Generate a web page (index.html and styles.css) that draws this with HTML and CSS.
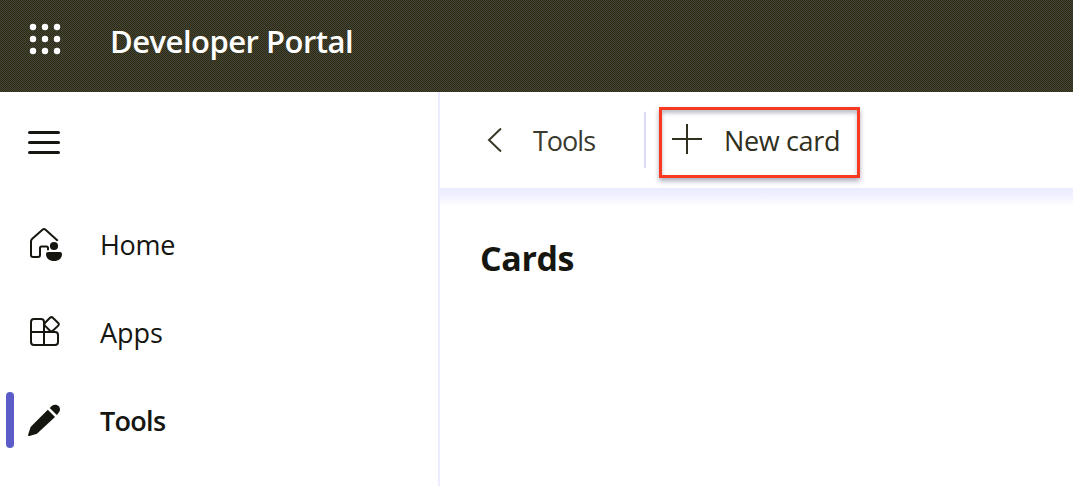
FILE: index.html
```html
<!DOCTYPE html>
<html lang="en">
<head>
<meta charset="utf-8">
<title>Developer Portal</title>
<link rel="stylesheet" href="styles.css">
</head>
<body>
<header class="topbar">
  <svg class="waffle" width="32" height="32" viewBox="0 0 32 32" fill="#fff">
    <circle cx="4" cy="4" r="3.2"/><circle cx="16" cy="4" r="3.2"/><circle cx="28" cy="4" r="3.2"/>
    <circle cx="4" cy="16" r="3.2"/><circle cx="16" cy="16" r="3.2"/><circle cx="28" cy="16" r="3.2"/>
    <circle cx="4" cy="28" r="3.2"/><circle cx="16" cy="28" r="3.2"/><circle cx="28" cy="28" r="3.2"/>
  </svg>
  <span class="brand">Developer Portal</span>
</header>
<div class="layout">
  <nav class="sidebar">
    <svg class="menu" width="32" height="24" viewBox="0 0 32 24" stroke="#161611" stroke-width="3" stroke-linecap="round">
      <path d="M1.5 2.5h29M1.5 12.5h29M1.5 22.5h29"/>
    </svg>
    <a class="item">
      <svg class="icon" width="40" height="40" viewBox="0 0 40 40" fill="none" stroke="#161611" stroke-width="2" stroke-linecap="round" stroke-linejoin="round">
        <path d="M34.2 15.2 22.3 4.6Q21 3.4 19.7 4.6L9 14Q8 15 8 16.4V30Q8 32 10 32H15Q17 32 17 30V23Q17 21.5 18.5 21.5H23.5Q25 21.5 25 23V24.5"/>
        <g fill="#161611" stroke="none"><circle cx="31" cy="21" r="4.1"/><path d="M25 27H37Q39 27 39 29C39 33.5 35.5 36 31 36S23 33.5 23 29Q23 27 25 27Z"/></g>
      </svg>
      <span class="label home">Home</span>
    </a>
    <a class="item">
      <svg class="icon" width="40" height="40" viewBox="0 0 40 40" fill="none" stroke="#161611" stroke-width="2" stroke-linejoin="round">
        <path d="M21 19V9Q21 6 18 6H11Q8 6 8 9V29Q8 32 11 32H32Q35 32 35 29V22Q35 19 32 19H8M21 19V32"/>
        <path d="M27 4.8 21.9 10Q20.7 11.4 21.9 12.6L27 17.8Q28.5 19 29.8 17.8L35.2 12.6Q36.5 11.4 35.2 10L29.8 4.8Q28.5 3.5 27 4.8Z"/>
      </svg>
      <span class="label apps">Apps</span>
    </a>
    <a class="item active">
      <svg class="icon" width="40" height="40" viewBox="0 0 40 40" fill="#161611">
        <path d="M24.8 8.8 32 16 14.5 32.2Q13.6 33 12.4 33.2L6.4 35Q4.7 35.5 5.1 33.8L7.1 27.5Q7.4 26.2 8.3 25.3Z"/>
        <path d="M26.7 6.9 29 4.8C31 3.1 33.8 3.3 35.6 5.1S37.6 9.7 35.8 11.6L33.8 14Z"/>
      </svg>
      <span class="label tools">Tools</span>
    </a>
  </nav>
  <main class="content">
    <div class="toolbar">
      <a class="back">
        <svg width="16" height="26" viewBox="0 0 16 26" fill="none" stroke="#3b3a2a" stroke-width="2"><path d="M15 1.5 3 13 15 24.5"/></svg>
        <span class="crumb">Tools</span>
      </a>
      <span class="divider"></span>
      <button class="newcard">
        <svg width="30" height="30" viewBox="0 0 30 30" stroke="#302f20" stroke-width="2"><path d="M0 15H30M15 0V30"/></svg>
        <span class="newlabel">New card</span>
      </button>
    </div>
    <div class="fade"></div>
    <h1 class="title">Cards</h1>
  </main>
</div>
</body>
</html>
```
FILE: styles.css
```css
* { box-sizing: border-box; }
body {
  margin: 0;
  height: 486px;
  overflow: hidden;
  background: #fff;
  color: #161611;
  font-family: "Open Sans", "Noto Sans", sans-serif;
}
.topbar {
  display: flex;
  height: 92px;
  padding: 23px 0 0 29px;
  background: repeating-conic-gradient(#45443a 0 25%, #2d2c10 0 50%) 0 0 / 2px 2px;
}
.waffle { flex: none; }
.brand {
  margin: -1px 0 0 49px;
  color: #fff;
  font-size: 31px;
  font-weight: 600;
  line-height: 38px;
  letter-spacing: -0.52px;
  white-space: nowrap;
}
.layout { display: flex; height: 394px; }
.sidebar {
  width: 440px;
  padding-top: 38px;
  border-right: 2px solid #ececff;
}
.menu { display: block; margin: 0 0 62px 28px; }
.item {
  display: flex;
  align-items: center;
  height: 56px;
  margin: 0 0 32px 6px;
}
.item::before { content: ""; width: 8px; height: 56px; border-radius: 4px; }
.active::before { background: #5b5cc8; }
.icon { flex: none; margin: 2px 0 0 9px; }
.label { margin: 2px 0 0 37px; font-size: 27px; line-height: 38px; }
.home { letter-spacing: -0.3px; }
.active .label { font-weight: 600; letter-spacing: -0.7px; }
.content { flex: 1; }
.toolbar {
  display: flex;
  height: 96px;
  padding: 15px 0 0 46px;
}
.fade { height: 17px; background: linear-gradient(#ebebff, #f1f1ff 45%, #fbfbff 90%, #fff); }
.back { display: flex; width: 158px; height: 66px; align-items: center; }
.crumb { margin: 1px 0 0 31px; font-size: 27px; letter-spacing: -1px; color: #3b3a2e; }
.divider { width: 2px; height: 56px; margin: 5px 13px 0 0; background: #d9d9fa; }
.newcard {
  display: flex;
  align-items: center;
  width: 201px;
  height: 71px;
  padding: 0 0 6px 10px;
  border: 3px solid #f93a20;
  background: #fff;
  box-shadow: 0 3px 5px #aaaabd, inset 0 3px 4px #bbbbc6;
  color: #302f20;
  font: 27px "Open Sans", "Noto Sans", sans-serif;
}
.newcard svg { margin-top: -1px; }
.newlabel { margin: 2px 0 0 22px; letter-spacing: -0.35px; white-space: nowrap; }
.title { margin: 30px 0 0 40px; font-size: 34px; line-height: 46px; font-weight: 700; letter-spacing: -0.4px; }
```
